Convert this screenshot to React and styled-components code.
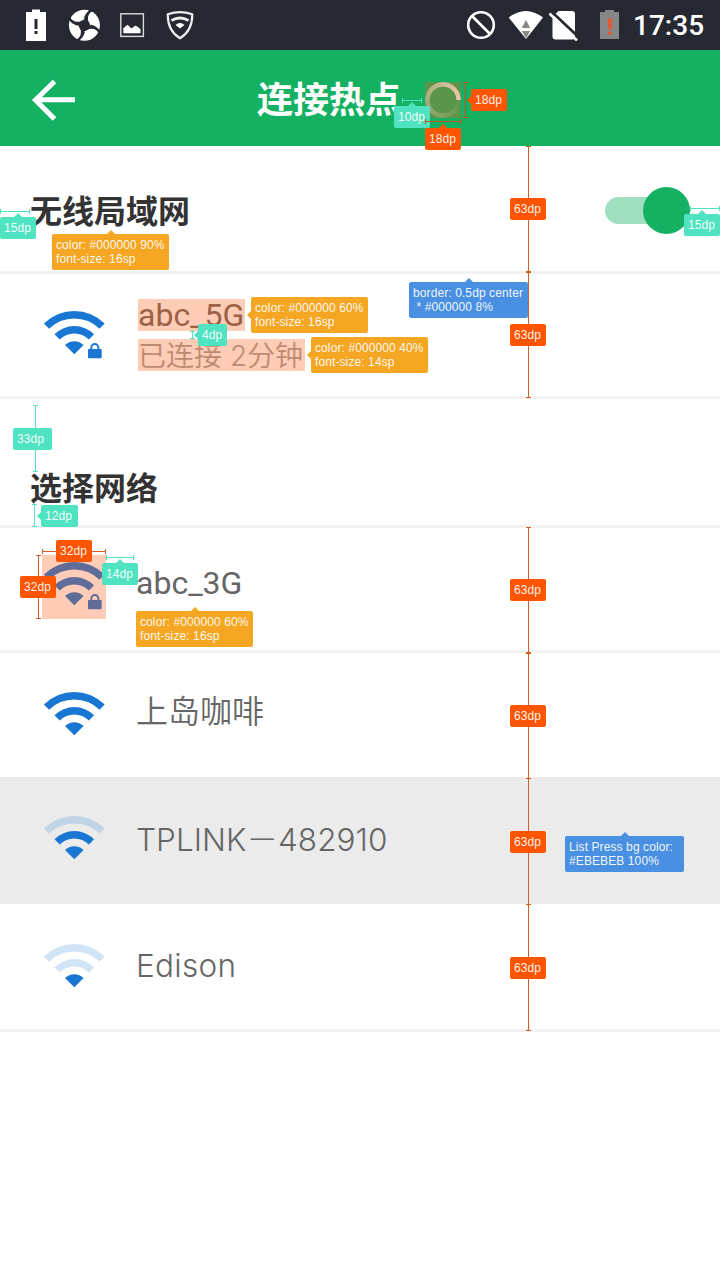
import React from "react";
import styled, { createGlobalStyle, css } from "styled-components";

const GlobalStyle = createGlobalStyle`
  * { box-sizing: border-box; }
  body { margin: 0; background: #fff; }
`;

const color = {
  status: "#262932",
  green: "#15b163",
  line: "#f2f2f2",
  wifi: "#1976d2",
  size: "#ff5500",
  sizeLine: "#d95b26",
  sizeLineOnGreen: "#c4521c",
  space: "#50e3c2",
  text: "#f5a623",
  note: "#4a90e2",
  tint: "rgba(255, 85, 16, 0.3)",
};

const Screen = styled.div`
  position: relative;
  width: 720px;
  height: 1280px;
  overflow: hidden;
  background: #fff;
  font-family: Roboto, "Noto Sans CJK SC", sans-serif;
`;

const StatusBar = styled.header`
  display: flex;
  align-items: center;
  height: 50px;
  padding: 0 16px 0 20px;
  background: ${color.status};
`;

const Notifications = styled.div`
  display: flex;
  gap: 16px;
  flex: 1;
`;

const SystemIcons = styled.div`
  display: flex;
  align-items: center;
`;

const Glyph = styled.svg`
  display: block;
  flex: none;
  width: ${(p) => p.$w || 32}px;
  height: 32px;
  margin-right: ${(p) => p.$after || 0}px;
`;

const Clock = styled.span`
  width: 71px;
  color: #fff;
  font-size: 28px;
  font-weight: 500;
  line-height: 50px;
  white-space: nowrap;
  padding-top: 2px;
`;

const TitleBar = styled.div`
  display: flex;
  align-items: center;
  height: 96px;
  padding-left: 30px;
  background: ${color.green};
`;

const BackIcon = styled.svg`
  width: 48px;
  height: 48px;
  margin-top: 4px;
`;

const Title = styled.h1`
  margin: -3px 24px 0 179px;
  color: #fff;
  font: 600 36px/48px "Noto Sans CJK SC", sans-serif;
`;

const SpinnerBox = styled.div`
  position: relative;
  width: 36px;
  height: 36px;
  margin-top: 4px;

  &::after {
    content: "";
    position: absolute;
    inset: 0;
    background: ${color.tint};
  }
`;

const Spinner = styled.div`
  width: 36px;
  height: 36px;
  border-radius: 50%;
  background: conic-gradient(from 90deg, rgba(255, 255, 255, 0), rgba(255, 255, 255, 0.9));
  mask: radial-gradient(circle, transparent 13px, #000 13.7px);
`;

const Section = styled.section`
  display: flex;
  justify-content: space-between;
  height: ${(p) => p.$height}px;
  padding: ${(p) => p.$top}px 30px 0;
  border-bottom: 3px solid ${color.line};
`;

const Heading = styled.h2`
  margin: -2px 0 0;
  color: #333;
  font: 600 32px/48px "Noto Sans CJK SC", sans-serif;
`;

const Switch = styled.div`
  display: flex;
  align-items: center;
  height: 47px;
`;

const Track = styled.div`
  width: 62px;
  height: 27px;
  border-radius: 13.5px 0 0 13.5px;
  background: #a1dfc1;
`;

const Knob = styled.div`
  width: 47px;
  height: 47px;
  margin-left: -24px;
  border-radius: 50%;
  background: ${color.green};
`;

const Row = styled.div`
  display: flex;
  align-items: flex-start;
  gap: ${(p) => p.$gap || 30}px;
  height: ${(p) => p.$height}px;
  padding: ${(p) => p.$top}px 0 0 42px;
  background: ${(p) => (p.$pressed ? "#ebebeb" : "#fff")};
  border-bottom: ${(p) => (p.$line ? `3px solid ${color.line}` : "0")};
`;

const IconBox = styled.div`
  flex: none;
  position: relative;
  width: 64px;
  height: 64px;

  ${(p) =>
    p.$marked &&
    css`
      &::after {
        content: "";
        position: absolute;
        inset: 0;
        background: ${color.tint};
      }
    `}
`;

const Network = styled.div`
  display: flex;
  flex-direction: column;
  align-items: flex-start;
  gap: 8px;
  margin-top: ${(p) => p.$shift || 0}px;
`;

const Name = styled.span`
  color: #666;
  font-size: ${(p) => p.$size || 32}px;
  font-weight: ${(p) => p.$weight || 400};
  font-family: ${(p) => p.$face || "Roboto"}, "Noto Sans CJK SC", sans-serif;
  letter-spacing: ${(p) => p.$track || 0}px;
  line-height: 32px;
  white-space: nowrap;
`;

const MarkedName = styled(Name)`
  color: #9b6248;
  background: #ffccb5;
  height: 32px;
  width: 107px;
`;

const Detail = styled.span`
  width: 167px;
  height: 32px;
  color: #bd8a71;
  background: #ffccb5;
  font: 350 28px/34px Inter, "Noto Sans CJK SC", sans-serif;
  white-space: nowrap;
`;

/* Spec overlay */
const Overlay = styled.div`
  position: absolute;
  inset: 0;
  pointer-events: none;
`;

const Ruler = styled.i`
  position: absolute;
  left: ${(p) => p.$x}px;
  top: ${(p) => p.$y}px;
  ${(p) =>
    p.$vertical
      ? css`
          width: 5px;
          height: ${p.$len}px;
          border: solid ${p.$color};
          border-width: ${p.$cap || 1}px 0;
          background: linear-gradient(${p.$color}, ${p.$color}) center / 1px 100% no-repeat;
        `
      : css`
          width: ${p.$len}px;
          height: 5px;
          border: solid ${p.$color};
          border-width: 0 1px;
          background: linear-gradient(${p.$color}, ${p.$color}) center / 100% 1px no-repeat;
        `}
`;

const Tag = styled.span`
  position: absolute;
  left: ${(p) => p.$x}px;
  top: ${(p) => p.$y}px;
  width: ${(p) => p.$w || 36}px;
  padding: 4px 0 4px 4px;
  border-radius: 2px;
  background: ${(p) => p.$color};
  color: rgba(255, 255, 255, 0.94);
  font: 12px/14px "Liberation Sans", sans-serif;
  letter-spacing: 0.1px;
  white-space: pre;

  &::before {
    content: "";
    position: absolute;
    border: 4px solid transparent;
    ${(p) => p.$arrow === "up" && `left: 50%; margin-left: -4px; top: -8px; border-bottom-color: ${p.$color};`}
    ${(p) => p.$arrow === "left" && `top: 50%; margin-top: -4px; left: -8px; border-right-color: ${p.$color};`}
  }
`;

const arc = (outer, inner) => {
  const k = Math.SQRT1_2;
  const cx = 32.3;
  const cy = 50;
  const o = outer * k;
  const i = inner * k;
  return `M${cx - o} ${cy - o}A${outer} ${outer} 0 0 1 ${cx + o} ${cy - o}L${cx + i} ${cy - i}A${inner} ${inner} 0 0 0 ${cx - i} ${cy - i}Z`;
};

function Wifi({ level = 3, locked, marked }) {
  return (
    <IconBox $marked={marked}>
      <svg width="64" height="64" viewBox="0 0 64 64" fill={color.wifi}>
        <path d={arc(43, 35.6)} opacity={level > 2 ? 1 : 0.2} />
        <path d={arc(28, 20.6)} opacity={level > 1 ? 1 : 0.2} />
        <path d="M32.3 50.3L23 41A13.2 13.2 0 0 1 41.6 41Z" />
        {locked && (
          <>
            <rect x="46" y="45" width="13.7" height="9.2" rx="1" />
            <path d="M49.3 46V43.6a3.55 3.55 0 0 1 7.1 0V46" fill="none" stroke={color.wifi} strokeWidth="2" />
          </>
        )}
      </svg>
    </IconBox>
  );
}

function StatusIcons() {
  return (
    <StatusBar>
      <Notifications>
        <Glyph viewBox="0 0 32 32">
          <path d="M6 3h6V.5h8V3h6v29H6z" fill="#fff" />
          <path d="M14.5 10h3v10h-3zM14.5 22h3v3h-3z" fill={color.status} />
        </Glyph>
        <Glyph viewBox="0 0 32 32">
          <g transform="translate(16.4 16.3)">
            <circle r="15.5" fill="#fff" />
            <path d="M2.4-7.4L7.4 2.4L-2.4 7.4L-7.4-2.4Z" fill={color.status} />
            {[0, 90, 180, 270].map((a) => (
              <path
                key={a}
                transform={`rotate(${a})`}
                d="M-.5-6.8Q.8-12.2 6-16L9-14.5Q2.8-12.4 3.6-5Z"
                fill={color.status}
              />
            ))}
          </g>
        </Glyph>
        <Glyph viewBox="0 0 32 32">
          <rect x="4.8" y="4.8" width="22.6" height="22.6" fill="none" stroke="#ddd" strokeWidth="1.4" />
          <path d="M7.3 24.2v-5l4.2-3.4 4 3.6 3.5-2.6 2 .5 3.5 3v3.9z" fill="#fff" />
        </Glyph>
        <Glyph viewBox="0 0 32 32">
          <path d="M3.8 5.2Q16 1 28.2 5.2Q28.6 21.5 16 29.3Q3.4 21.5 3.8 5.2Z" fill="none" stroke="#eee" strokeWidth="2.2" />
          <path d="M7.5 11.5Q16 6.5 24.5 11.5" fill="none" stroke="#eee" strokeWidth="2.8" />
          <path d="M11.5 16Q16 12.2 20.5 16L16 19.4Z" fill="#fff" />
        </Glyph>
      </Notifications>
      <SystemIcons>
        <Glyph viewBox="0 0 32 32" $after={11}>
          <circle cx="16" cy="16" r="12.8" fill="none" stroke="#fff" strokeWidth="2.6" />
          <path d="M7 7L25 25" stroke="#fff" strokeWidth="2.6" />
        </Glyph>
        <Glyph viewBox="0 0 36 32" $w={36} $after={4}>
          <path d="M.7 8.4Q17.8-4.6 35 8.4L18 30Z" fill="#fff" />
          <path d="M13.8 19h8.4L18 11zM13.8 22h8.4L18 29.5z" fill="#888" />
        </Glyph>
        <Glyph viewBox="0 0 32 32" $after={17}>
          <path d="M10.5 2H24a3 3 0 0 1 3 3v22.5a3 3 0 0 1-3 3H7.5a3 3 0 0 1-3-3V8z" fill="#fff" />
          <path d="M3.7 2.7L31.5 29" stroke={color.status} strokeWidth="2.7" />
          <path d="M1.5 4.5L29 31.5" stroke="#fff" strokeWidth="2.6" />
        </Glyph>
        <Glyph viewBox="0 0 24 32" $w={24} $after={12}>
          <path d="M3 3h5V1h9v2h5v27H3z" fill="#868789" />
          <path d="M10.7 9.5h4.6l-.6 11h-3.4zM11 22.5h4v3h-4z" fill="#e05a33" />
        </Glyph>
      </SystemIcons>
      <Clock>17:35</Clock>
    </StatusBar>
  );
}

const rowLabels = [198, 324, 579, 705, 831, 957];
const rowRulers = [146, 271, 527, 652, 778, 904];

function SpecOverlay() {
  const size = { $color: color.size };
  const sizeLine = { $color: color.sizeLine };
  const headerLine = { $color: color.sizeLineOnGreen };
  const space = { $color: color.space };
  return (
    <Overlay>
      {rowRulers.map((y) => (
        <Ruler key={y} $vertical $x={526} $y={y} $len={127} {...sizeLine} />
      ))}
      {rowLabels.map((y) => (
        <Tag key={y} $x={510} $y={y} {...size}>63dp</Tag>
      ))}

      <Ruler $x={402} $y={98} $len={20} {...space} />
      <Tag $x={394} $y={106} $arrow="up" {...space}>10dp</Tag>
      <Ruler $vertical $x={463} $y={82} $len={36} {...headerLine} />
      <Ruler $x={425} $y={119} $len={37} {...headerLine} />
      <Tag $x={471} $y={89} $arrow="left" {...size}>18dp</Tag>
      <Tag $x={425} $y={128} $arrow="up" {...size}>18dp</Tag>

      <Ruler $x={0} $y={209} $len={30} {...space} />
      <Tag $x={0} $y={217} $arrow="up" {...space}>15dp</Tag>
      <Ruler $x={690} $y={206} $len={30} {...space} />
      <Tag $x={684} $y={214} $arrow="up" {...space}>15dp</Tag>

      <Tag $x={52} $y={234} $w={117} $arrow="up" $color={color.text}>{"color: #000000 90%\nfont-size: 16sp"}</Tag>
      <Tag $x={251} $y={297} $w={117} $arrow="left" $color={color.text}>{"color: #000000 60%\nfont-size: 16sp"}</Tag>
      <Tag $x={311} $y={337} $w={117} $arrow="left" $color={color.text}>{"color: #000000 40%\nfont-size: 14sp"}</Tag>
      <Tag $x={136} $y={611} $w={117} $arrow="up" $color={color.text}>{"color: #000000 60%\nfont-size: 16sp"}</Tag>
      <Tag $x={409} $y={282} $w={119} $arrow="up" $color={color.note}>{"border: 0.5dp center\n * #000000 8%"}</Tag>
      <Tag $x={565} $y={836} $w={119} $arrow="up" $color={color.note}>{"List Press bg color:\n#EBEBEB 100%"}</Tag>

      <Ruler $vertical $x={190} $y={331} $len={8} {...space} />
      <Tag $x={198} $y={324} $w={29} $arrow="left" {...space}>4dp</Tag>
      <Ruler $vertical $x={33} $y={405} $len={67} {...space} />
      <Tag $x={13} $y={428} $w={39} {...space}>33dp</Tag>
      <Ruler $vertical $x={32} $y={504} $len={23} {...space} />
      <Tag $x={41} $y={505} $w={37} $arrow="left" {...space}>12dp</Tag>

      <Ruler $x={42} $y={549} $len={64} {...sizeLine} />
      <Ruler $vertical $x={36} $y={555} $len={64} {...sizeLine} />
      <Tag $x={56} $y={540} {...size}>32dp</Tag>
      <Tag $x={20} $y={576} {...size}>32dp</Tag>
      <Ruler $x={106} $y={555} $len={28} {...space} />
      <Tag $x={102} $y={563} $arrow="up" {...space}>14dp</Tag>
    </Overlay>
  );
}

export default function App() {
  return (
    <Screen>
      <GlobalStyle />
      <StatusIcons />
      <TitleBar>
        <BackIcon viewBox="0 0 48 48" fill="none" stroke="#fff" strokeWidth="5">
          <path d="M24.5 5.5L5.5 24L24.5 43M5 23.7H45" />
        </BackIcon>
        <Title>连接热点</Title>
        <SpinnerBox>
          <Spinner />
        </SpinnerBox>
      </TitleBar>

      <Section $height={128} $top={41}>
        <Heading>无线局域网</Heading>
        <Switch>
          <Track />
          <Knob />
        </Switch>
      </Section>
      <Row $height={125} $top={30} $line $gap={32}>
        <Wifi locked />
        <Network $shift={-5}>
          <MarkedName>abc_5G</MarkedName>
          <Detail>已连接 2分钟</Detail>
        </Network>
      </Row>
      <Section $height={129} $top={65}>
        <Heading>选择网络</Heading>
      </Section>
      <Row $height={125} $top={27} $line>
        <Wifi locked marked />
        <Network $shift={12}>
          <Name>abc_3G</Name>
        </Network>
      </Row>
      <Row $height={124} $top={32}>
        <Wifi />
        <Network $shift={11}>
          <Name $weight={350}>上岛咖啡</Name>
        </Network>
      </Row>
      <Row $height={127} $top={32} $pressed>
        <Wifi level={2} />
        <Network $shift={15}>
          <Name $weight={320} $face="Inter" $size={31.5} $track={0.05}>TPLINK－482910</Name>
        </Network>
      </Row>
      <Row $height={128} $top={33} $line>
        <Wifi level={1} />
        <Network $shift={13}>
          <Name $weight={320} $face="Inter" $size={31.5} $track={0.3}>Edison</Name>
        </Network>
      </Row>
      <SpecOverlay />
    </Screen>
  );
}
